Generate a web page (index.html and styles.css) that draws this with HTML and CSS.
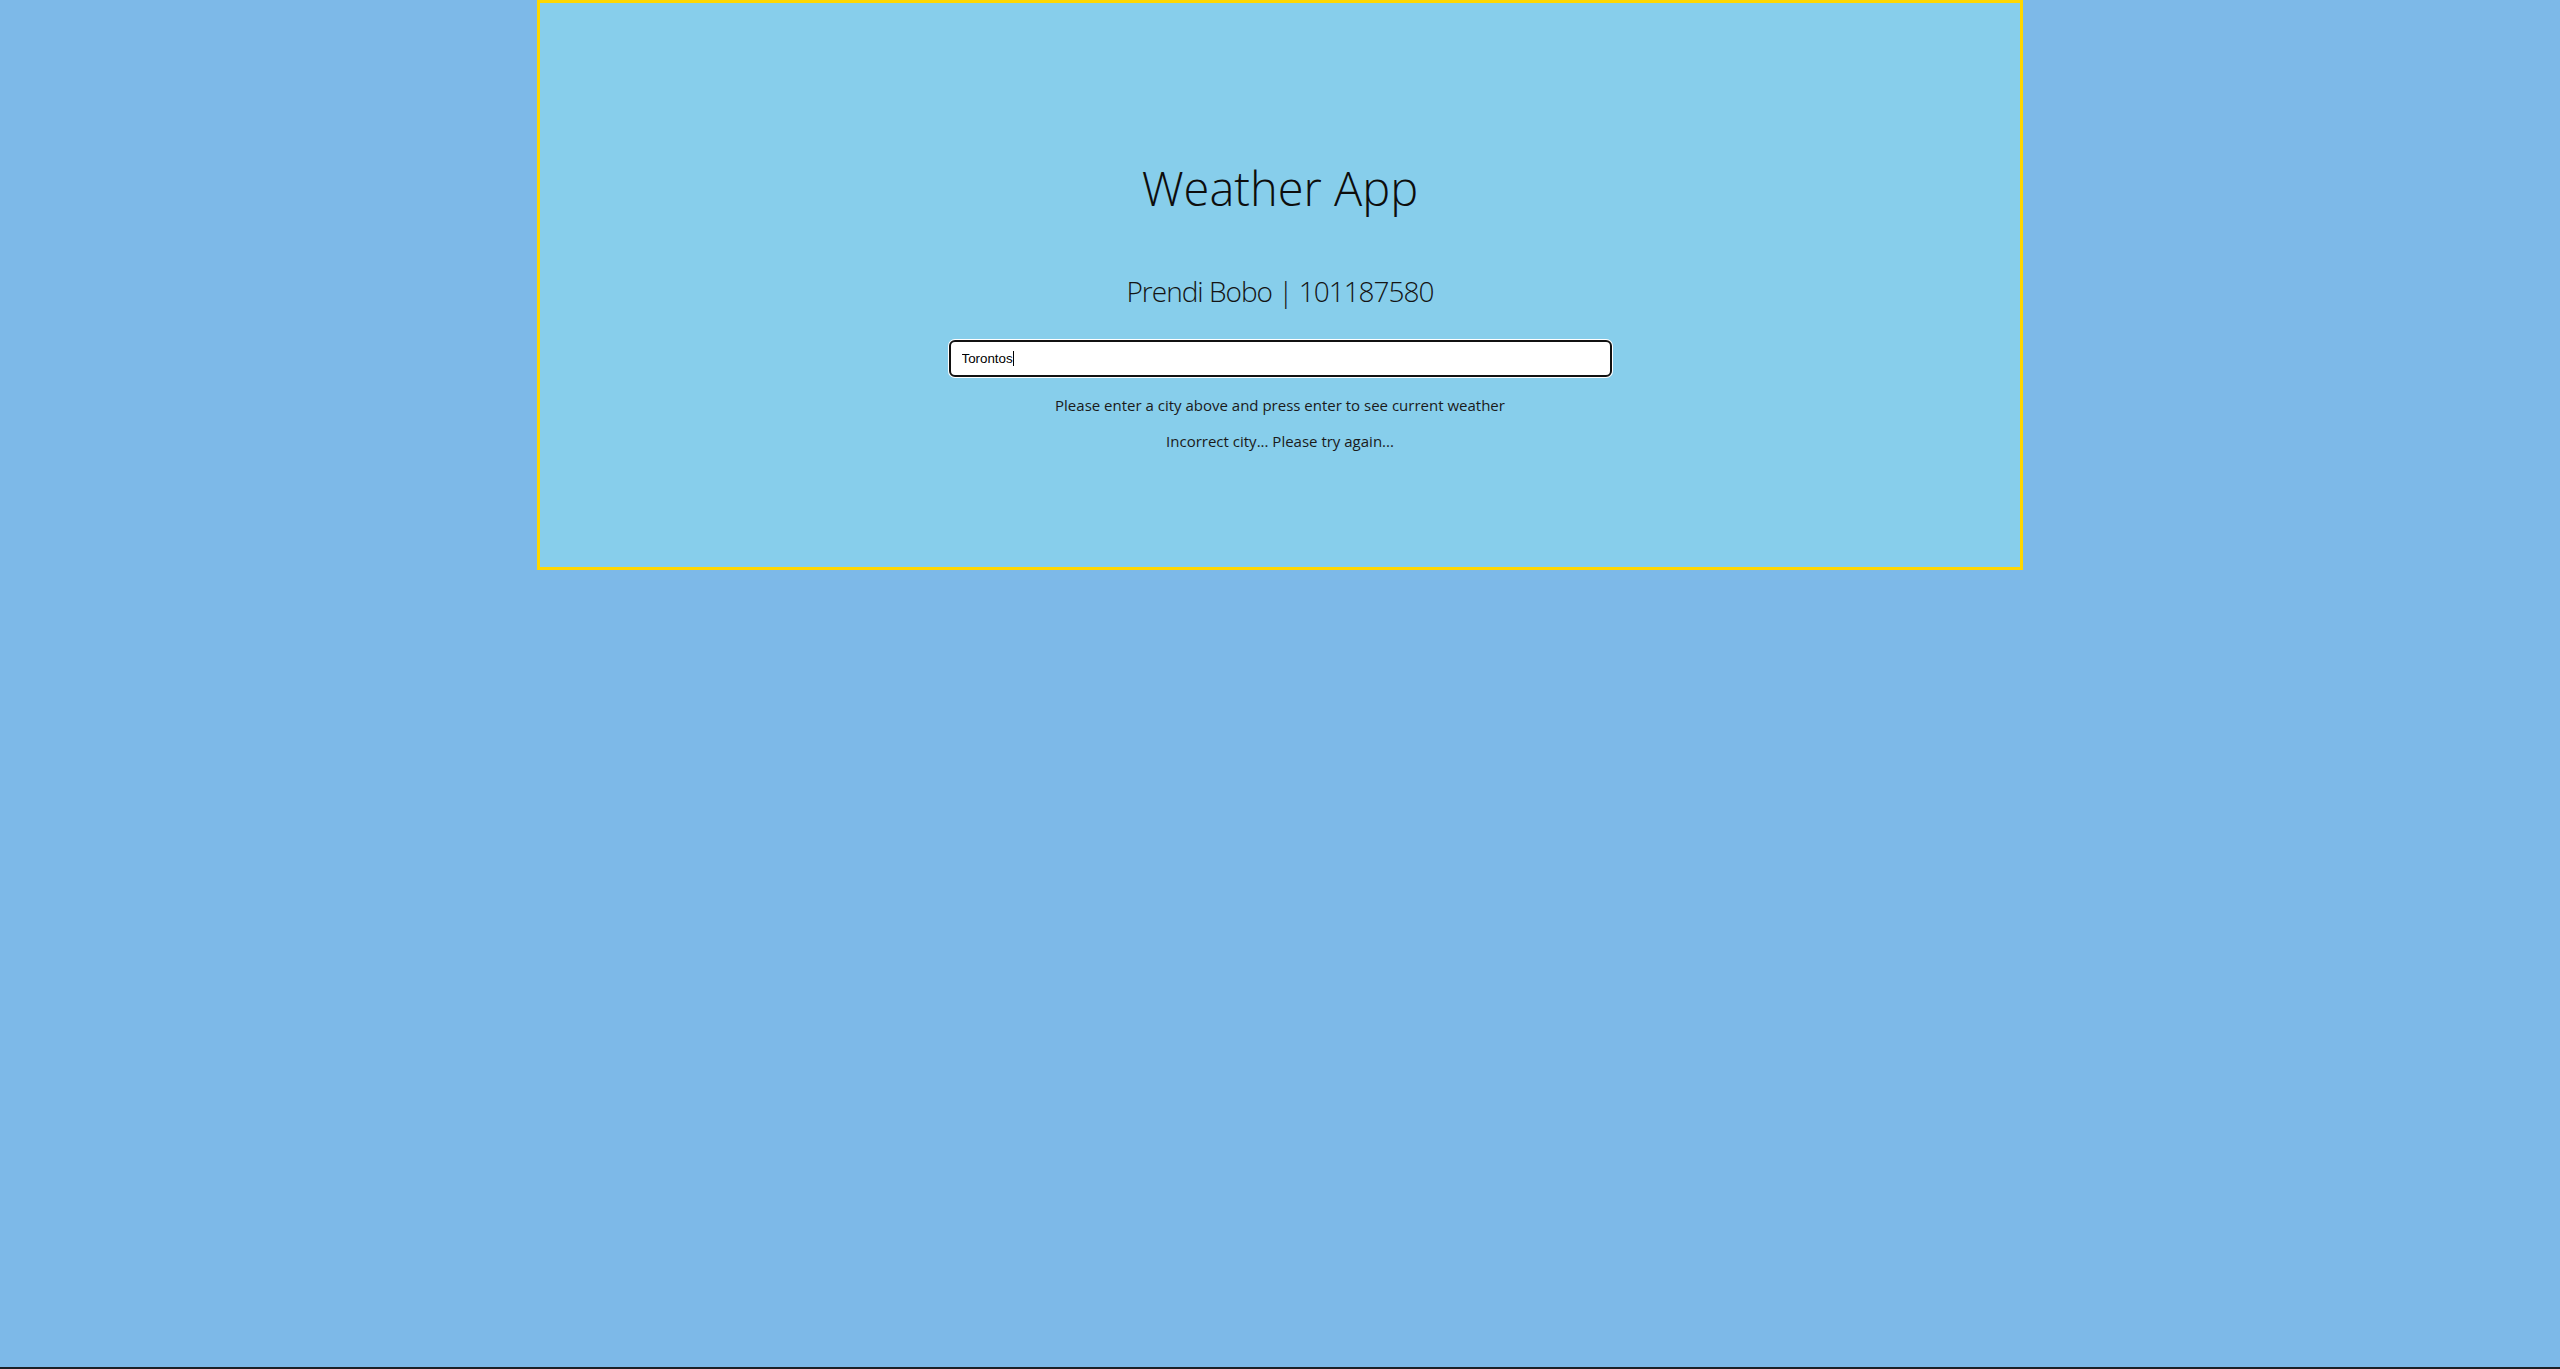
FILE: index.html
```html
<!DOCTYPE html>
<html lang="en">
<head>
<meta charset="utf-8">
<title>Weather App</title>
<link rel="stylesheet" href="styles.css">
</head>
<body>
<main class="app">
  <h1 class="title">Weather App</h1>
  <h2 class="subtitle">Prendi Bobo | 101187580</h2>
  <div class="input-wrap">
    <input class="city-input" type="text" value="Torontos">
    <div class="caret-layer" aria-hidden="true"><span class="ghost">Torontos</span><span class="caret"></span></div>
  </div>
  <p class="hint">Please enter a city above and press enter to see current weather</p>
  <p class="error">Incorrect city... Please try again...</p>
</main>
<div class="taskbar-edge"></div>
</body>
</html>
```
FILE: styles.css
```css
html, body {
  margin: 0;
  padding: 0;
  height: 100%;
}
body {
  background: #7db9e8;
  font-family: "Open Sans", "Noto Sans", sans-serif;
  color: #111;
}
.app {
  box-sizing: border-box;
  width: 1486px;
  height: 570px;
  margin: 0 auto;
  border: 3px solid #ffd700;
  background: #87ceeb;
  display: flex;
  flex-direction: column;
  align-items: center;
  padding-top: 162px;
}
.title {
  margin: 0;
  font-size: 47px;
  line-height: 47px;
  font-weight: 300;
  color: #0d0d0d;
}
.subtitle {
  margin: 65px 0 0;
  font-size: 28px;
  line-height: 28px;
  font-weight: 300;
  letter-spacing: -1px;
  color: #141414;
}
.input-wrap {
  position: relative;
  margin-top: 35px;
  width: 663px;
  height: 37px;
}
.city-input {
  box-sizing: border-box;
  display: block;
  width: 100%;
  height: 100%;
  margin: 0;
  border: 2px solid #111;
  border-radius: 6px;
  box-shadow: 0 0 0 1px #fff;
  outline: none;
  background: #fff;
  padding: 0 11px;
  font-family: "Liberation Sans", Arial, sans-serif;
  font-size: 13.33px;
  color: #000;
}
.caret-layer {
  position: absolute;
  left: 13px;
  top: 0;
  height: 100%;
  display: flex;
  align-items: center;
  font-family: "Liberation Sans", Arial, sans-serif;
  font-size: 13.33px;
  pointer-events: none;
}
.ghost {
  visibility: hidden;
  white-space: pre;
}
.caret {
  display: block;
  width: 1px;
  height: 15px;
  background: #000;
}
.hint,
.error {
  margin: 21px 0 0;
  font-size: 15px;
  line-height: 15px;
  font-weight: 400;
  color: #1a1a1a;
}
.taskbar-edge {
  position: fixed;
  left: 0;
  right: 0;
  bottom: 0;
  height: 2px;
  background: #1c2127;
}
```
